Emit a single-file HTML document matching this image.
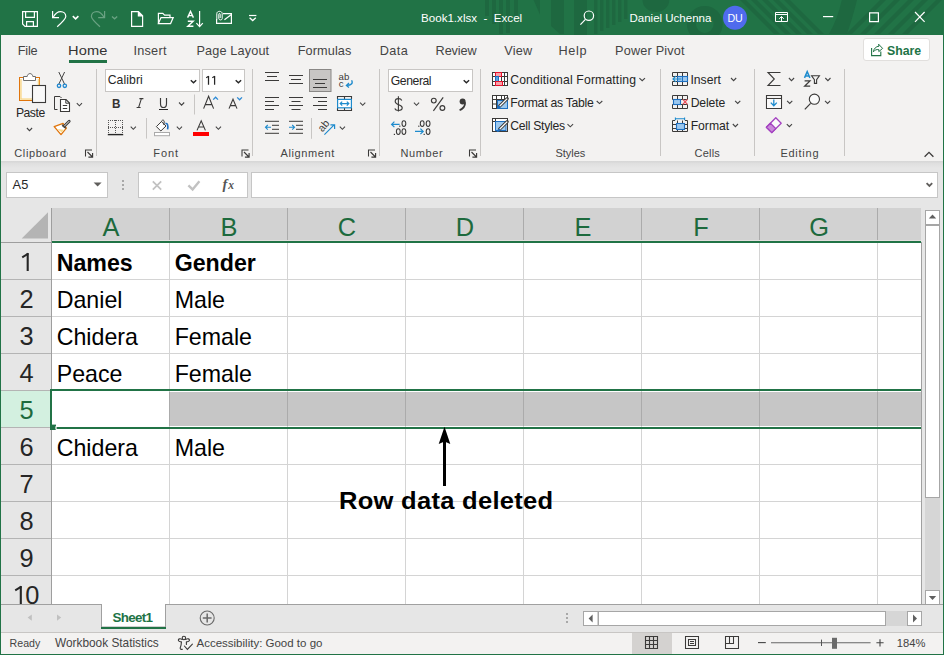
<!DOCTYPE html>
<html><head><meta charset="utf-8"><style>
*{box-sizing:border-box;margin:0;padding:0}
html,body{width:944px;height:655px;overflow:hidden}
body{position:relative;font-family:"Liberation Sans", sans-serif;background:#f3f2f1;color:#262626}
.a{position:absolute}
.t{position:absolute;white-space:nowrap;line-height:1}
.s{position:absolute;left:0;top:0}
</style></head><body>
<div class="a" style="left:0px;top:0px;width:944px;height:35px;background:#217346;"></div>
<svg class="s" width="944" height="655" viewBox="0 0 944 655" fill="none"><svg x="0" y="0" width="944" height="35" overflow="hidden"><rect x="485" y="0" width="4" height="16" fill="#1e6840"/><rect x="492" y="0" width="4" height="24" fill="#1e6840"/><rect x="499" y="0" width="4" height="34" fill="#1e6840"/><rect x="506" y="0" width="4" height="33" fill="#1e6840"/><rect x="514" y="0" width="4" height="16" fill="#1e6840"/><path d="M533.6 0 L540 0 L540 14.8 Z" fill="#1e6840"/><path d="M551 0 H564 V34 H560 L551 26 Z" fill="#1e6840"/><rect x="574" y="0" width="13" height="35" fill="#1e6840"/><rect x="594" y="0" width="3.4" height="34" fill="#1e6840"/><rect x="600" y="0" width="3.4" height="31" fill="#1e6840"/><rect x="606" y="0" width="3.4" height="28" fill="#1e6840"/><rect x="612" y="0" width="3.4" height="25" fill="#1e6840"/><rect x="618" y="0" width="3.4" height="22" fill="#1e6840"/><rect x="624" y="0" width="3.4" height="19" fill="#1e6840"/><path d="M642.5 0 A13.4 12 0 0 0 669.3 0 Z" fill="#1e6840"/><circle cx="704.8" cy="24" r="13.4" stroke="#1e6840" stroke-width="9"/><path d="M740 0 L746 0 L780 34 L774 34 Z" fill="#1e6840"/><path d="M751 0 L757 0 L791 34 L785 34 Z" fill="#1e6840"/><path d="M762 0 L768 0 L802 34 L796 34 Z" fill="#1e6840"/><path d="M773 0 L779 0 L813 34 L807 34 Z" fill="#1e6840"/><path d="M784 0 L790 0 L824 34 L818 34 Z" fill="#1e6840"/><path d="M841.8 0 L857 0 Q852 20 846.9 34 L829 34 Q838 18 841.8 0 Z" fill="#1e6840"/><path d="M880 0 L886 0 L852 34 L846 34 Z" fill="#1e6840"/><path d="M894 0 L900 0 L866 34 L860 34 Z" fill="#1e6840"/><path d="M908 0 L914 0 L880 34 L874 34 Z" fill="#1e6840"/><path d="M922 0 L928 0 L894 34 L888 34 Z" fill="#1e6840"/><path d="M936 0 L942 0 L908 34 L902 34 Z" fill="#1e6840"/></svg>
<path d="M22.6 11.6 H37.4 V26.4 H25 L22.6 24 Z" stroke="#fff" stroke-width="1.2"/>
<path d="M25.6 11.6 V17.4 H34.4 V11.6" stroke="#fff" stroke-width="1.2"/>
<path d="M26.6 26.4 V21.6 H33.4 V26.4" stroke="#fff" stroke-width="1.2"/>
<path d="M52.6 11 V17.6 H59" stroke="#fff" stroke-width="1.2"/>
<path d="M53.2 17.2 C55.5 13.2 58 11.6 60.6 11.6 C63.6 11.6 65.8 13.8 65.8 16.6 C65.8 18.8 64.2 20.6 57.2 26.8" stroke="#fff" stroke-width="1.2"/>
<path d="M72.8 16.2 L75.6 18.8 L78.4 16.2" stroke="#fff" stroke-width="1.6"/>
<path d="M104.6 11 V17.6 H98.2" stroke="#6aa283" stroke-width="1.2"/>
<path d="M104 17.2 C101.7 13.2 99.2 11.6 96.6 11.6 C93.6 11.6 91.4 13.8 91.4 16.6 C91.4 18.8 93 20.6 100 26.8" stroke="#6aa283" stroke-width="1.2"/>
<path d="M112 16.4 L114.6 18.8 L117.2 16.4" stroke="#6aa283" stroke-width="1.3"/>
<path d="M131.6 11.6 H138.4 L142.6 15.8 V26.4 H131.6 Z M138.4 11.6 V15.8 H142.6" stroke="#fff" stroke-width="1.2"/>
<path d="M138.4 11.6 L142.6 15.8 H138.4 Z" fill="#fff"/>
<path d="M158.4 23.6 V13.4 H162.8 L164.6 15.2 H170 V17.4" stroke="#fff" stroke-width="1.2"/>
<path d="M158.4 23.6 L161 17.6 H173.2 L170.6 23.6 Z" stroke="#fff" stroke-width="1.2"/>
<path d="M187.6 17.6 L190.5 11.5 L193.4 17.6 M188.6 15.6 H192.4" stroke="#fff" stroke-width="1.4"/>
<path d="M187.8 21.2 H193.2 L187.8 26.3 H193.4" stroke="#fff" stroke-width="1.4"/>
<path d="M199.6 11 V26.4 M196.4 23.2 L199.6 26.6 L202.8 23.2" stroke="#fff" stroke-width="1.2"/>
<path d="M216.6 19 V23.4 H231.4 V13.6 H223" stroke="#fff" stroke-width="1.2"/>
<path d="M224.4 19.8 L231.4 14.4" stroke="#fff" stroke-width="1.2"/>
<path d="M216.8 19.6 V13.6 C216.8 10.6 222.2 10.6 222.2 13.6 V18.6 C222.2 20.4 218.8 20.4 218.8 18.6 V14.2 C218.8 13.2 220.2 13.2 220.2 14.2 V18" stroke="#fff" stroke-width="1"/>
<path d="M249 15.5 H256.4" stroke="#fff" stroke-width="1.2"/><path d="M249.6 17.8 L252.7 20.6 L255.8 17.8" stroke="#fff" stroke-width="1.3"/></svg>
<div class="t" style="left:421.00px;top:11.64px;font-size:11.6px;color:#fff;">Book1.xlsx&nbsp;&nbsp;-&nbsp;&nbsp;Excel</div>
<svg class="s" width="944" height="655" viewBox="0 0 944 655" fill="none"><circle cx="588.9" cy="15.7" r="4.7" stroke="#fff" stroke-width="1.2"/><path d="M585.4 19.3 L580.4 24.6" stroke="#fff" stroke-width="1.2"/></svg>
<div class="t" style="left:629.50px;top:13.05px;font-size:11.5px;color:#fff;">Daniel Uchenna</div>
<svg class="s" width="944" height="655" viewBox="0 0 944 655" fill="none"><circle cx="735" cy="17.8" r="12" fill="#4f6bed"/></svg>
<div class="t" style="left:727.40px;top:13.14px;font-size:10.7px;color:#fff;">DU</div>
<svg class="s" width="944" height="655" viewBox="0 0 944 655" fill="none"><path d="M775.5 12.5 H787.5 V21.5 H775.5 Z M775.5 14.5 H787.5" stroke="#fff" stroke-width="1"/>
<path d="M781.5 21.5 V16.6 M779.2 18.8 L781.5 16.5 L783.8 18.8" stroke="#fff" stroke-width="1"/>
<path d="M823 16.6 H833.2" stroke="#fff" stroke-width="1.2"/>
<path d="M869.6 12.8 H878.4 V21.6 H869.6 Z" stroke="#fff" stroke-width="1.2"/>
<path d="M915 12 L924.6 21.8 M924.6 12 L915 21.8" stroke="#fff" stroke-width="1.2"/></svg>
<div class="t" style="left:17.80px;top:45.31px;font-size:12.7px;color:#444444;letter-spacing:-0.2px;">File</div>
<div class="t" style="left:133.40px;top:45.31px;font-size:12.7px;color:#444444;letter-spacing:0.26px;">Insert</div>
<div class="t" style="left:196.50px;top:45.31px;font-size:12.7px;color:#444444;letter-spacing:0.14px;">Page Layout</div>
<div class="t" style="left:297.70px;top:45.31px;font-size:12.7px;color:#444444;letter-spacing:0.11px;">Formulas</div>
<div class="t" style="left:379.70px;top:45.31px;font-size:12.7px;color:#444444;letter-spacing:0.4px;">Data</div>
<div class="t" style="left:435.60px;top:45.31px;font-size:12.7px;color:#444444;letter-spacing:-0.12px;">Review</div>
<div class="t" style="left:504.20px;top:45.31px;font-size:12.7px;color:#444444;letter-spacing:0.27px;">View</div>
<div class="t" style="left:558.40px;top:45.31px;font-size:12.7px;color:#444444;letter-spacing:0.73px;">Help</div>
<div class="t" style="left:615.10px;top:45.31px;font-size:12.7px;color:#444444;letter-spacing:0.18px;">Power Pivot</div>
<div class="t" style="left:68.40px;top:45.31px;font-size:12.7px;color:#333;letter-spacing:0.1px;transform:scaleX(1.15);transform-origin:0 0">Home</div>
<div class="a" style="left:69px;top:60px;width:38px;height:3px;background:#217346;"></div>
<div class="a" style="left:863px;top:38px;width:67px;height:23px;background:#fff;border:1px solid #e1dfdd;border-radius:3px"></div>
<div class="t" style="left:887.00px;top:44.75px;font-size:12.3px;color:#217346;font-weight:700;">Share</div>
<svg class="s" width="944" height="655" viewBox="0 0 944 655" fill="none"><path d="M871.6 48 V55.6 H880.8 V51.4" stroke="#217346" stroke-width="1.1"/>
<path d="M873.4 51.8 C873.8 48.6 876 46.4 879 46.2 L878.6 44.2 L882.6 48.4 L878.8 51.6 L878.8 49.6 C876.6 49.2 874.8 50 873.4 51.8 Z" stroke="#217346" stroke-width="1" stroke-linejoin="round"/>
<rect x="19.5" y="77.5" width="20" height="23" fill="#fbfbfb" stroke="#e0750c" stroke-width="1"/>
<path d="M21 79 V99 H38.5 V79" stroke="#f9d88a" stroke-width="1.6"/>
<rect x="21.8" y="79.8" width="15.4" height="18.4" fill="#fafafa"/>
<path d="M23.5 80.5 V76.5 H27.2 C27.6 72.6 32.4 72.6 32.8 76.5 H35.5 V80.5 Z" fill="#fff" stroke="#6e6e6e" stroke-width="1"/>
<rect x="32.5" y="85.5" width="13" height="17" fill="#f9f9f9" stroke="#3b3a39" stroke-width="1.1"/></svg>
<div class="t" style="left:15.90px;top:107.47px;font-size:12.2px;color:#262626;letter-spacing:-0.47px;">Paste</div>
<svg class="s" width="944" height="655" viewBox="0 0 944 655" fill="none"><path d="M26.9 128.0 L29.5 130.6 L32.1 128.0" stroke="#444" stroke-width="1.1"/>
<path d="M58.8 72 L64.6 84.2 M64.6 72 L58.8 84.2" stroke="#444" stroke-width="1"/>
<circle cx="59" cy="85.8" r="1.7" stroke="#1e88d0" stroke-width="1.3"/><circle cx="64.8" cy="85.8" r="1.7" stroke="#1e88d0" stroke-width="1.3"/>
<path d="M57.5 109.5 H54.5 V96.5 H60 L61.5 98" stroke="#3b3a39" stroke-width="1"/>
<path d="M60.5 99.5 H66 L69.5 103 V111.5 H60.5 Z" fill="#fff" stroke="#3b3a39" stroke-width="1.1"/>
<path d="M65.8 99.5 V103.2 H69.5 M62.8 105.5 H67.2 M62.8 108.5 H67.2" stroke="#3b3a39" stroke-width="1"/>
<path d="M76.8 103.2 L79.4 105.8 L82.0 103.2" stroke="#444" stroke-width="1.1"/>
<path d="M54.2 126.6 L63 123.4 L66.4 128.2 L61 134.6 Z" fill="#fff" stroke="#e0750c" stroke-width="1.3" stroke-linejoin="round"/>
<path d="M57.5 129 L61.8 132.4 L63.6 129.8 Z" fill="#f9d88a"/>
<path d="M62.6 126.6 L68.6 120.6 C69.4 119.8 70.6 121 69.8 121.8 L63.8 127.8" fill="#fff" stroke="#3b3a39" stroke-width="1.1"/>
<path d="M62 124.6 L65.8 128.4" stroke="#3b3a39" stroke-width="1.2"/></svg>
<div class="t" style="left:14.30px;top:147.71px;font-size:11px;color:#444;letter-spacing:0.6px;">Clipboard</div>
<svg class="s" width="944" height="655" viewBox="0 0 944 655" fill="none"><path d="M85.5 156.5 V150.0 H92" stroke="#3b3a39" stroke-width="1.05"/>
<path d="M87.5 152.0 L92.5 157.0 M92.6 152.9 V157.1 H88.4" stroke="#3b3a39" stroke-width="1.15"/>
<path d="M96.5 69 V156" stroke="#c8c6c4" stroke-width="1"/></svg>
<div class="a" style="left:105px;top:69px;width:95px;height:23px;background:#fff;border:1px solid #c8c6c4"></div>
<div class="t" style="left:107.70px;top:74.47px;font-size:12.2px;color:#262626;letter-spacing:0.1px;">Calibri</div>
<svg class="s" width="944" height="655" viewBox="0 0 944 655" fill="none"><path d="M190.8 80.2 L193.5 82.8 L196.2 80.2" stroke="#262626" stroke-width="1.4"/></svg>
<div class="a" style="left:202px;top:69px;width:43px;height:23px;background:#fff;border:1px solid #c8c6c4"></div>
<svg class="s" width="944" height="655" viewBox="0 0 944 655" fill="none"><path d="M208.5 75.9 V84.8 M214.6 75.9 V84.8" stroke="#262626" stroke-width="1.25"/><path d="M208.6 76.3 L206.2 77.8 M214.7 76.3 L212.3 77.8" stroke="#262626" stroke-width="1.1"/>
<path d="M235.7 80.2 L238.4 82.8 L241.1 80.2" stroke="#262626" stroke-width="1.4"/></svg>
<div class="t" style="left:112.20px;top:96.70px;font-size:13.6px;color:#333;font-weight:700;transform:scaleX(0.86);transform-origin:0 0">B</div>
<svg class="s" width="944" height="655" viewBox="0 0 944 655" fill="none"><path d="M139.4 98.6 H143.4 M141.4 98.6 L138.6 107.5 M136.6 107.5 H140.6" stroke="#3b3a39" stroke-width="1.05"/>
<path d="M160.5 98 V103.4 C160.5 106.1 161.8 107.5 163.5 107.5 C165.2 107.5 166.5 106.1 166.5 103.4 V98" stroke="#3b3a39" stroke-width="1.15"/>
<path d="M159 109.5 H168" stroke="#262626" stroke-width="1"/>
<path d="M179.0 102.5 L181.6 105.1 L184.2 102.5" stroke="#444" stroke-width="1.1"/>
<path d="M194.5 94.5 V114.5" stroke="#c8c6c4" stroke-width="1"/>
<path d="M203.6 108.6 L208.6 96.2 L213.6 108.6 M205.3 104.6 H211.9" stroke="#3b3a39" stroke-width="1.1"/>
<path d="M213.2 99.6 L215.6 97.2 L218 99.6" stroke="#2b8ad6" stroke-width="1.3"/>
<path d="M229 108.6 L233 99.2 L237 108.6 M230.3 105.6 H235.7" stroke="#3b3a39" stroke-width="1.1"/>
<path d="M237.2 97.4 L239.6 99.8 L242 97.4" stroke="#2b8ad6" stroke-width="1.3"/>
<rect x="108" y="120" width="1" height="1" fill="#555"/><rect x="108" y="127" width="1" height="1" fill="#555"/><rect x="110" y="120" width="1" height="1" fill="#555"/><rect x="110" y="127" width="1" height="1" fill="#555"/><rect x="112" y="120" width="1" height="1" fill="#555"/><rect x="112" y="127" width="1" height="1" fill="#555"/><rect x="114" y="120" width="1" height="1" fill="#555"/><rect x="114" y="127" width="1" height="1" fill="#555"/><rect x="116" y="120" width="1" height="1" fill="#555"/><rect x="116" y="127" width="1" height="1" fill="#555"/><rect x="118" y="120" width="1" height="1" fill="#555"/><rect x="118" y="127" width="1" height="1" fill="#555"/><rect x="120" y="120" width="1" height="1" fill="#555"/><rect x="120" y="127" width="1" height="1" fill="#555"/><rect x="122" y="120" width="1" height="1" fill="#555"/><rect x="122" y="127" width="1" height="1" fill="#555"/><rect x="108" y="120" width="1" height="1" fill="#555"/><rect x="115" y="120" width="1" height="1" fill="#555"/><rect x="122" y="120" width="1" height="1" fill="#555"/><rect x="108" y="122" width="1" height="1" fill="#555"/><rect x="115" y="122" width="1" height="1" fill="#555"/><rect x="122" y="122" width="1" height="1" fill="#555"/><rect x="108" y="124" width="1" height="1" fill="#555"/><rect x="115" y="124" width="1" height="1" fill="#555"/><rect x="122" y="124" width="1" height="1" fill="#555"/><rect x="108" y="126" width="1" height="1" fill="#555"/><rect x="115" y="126" width="1" height="1" fill="#555"/><rect x="122" y="126" width="1" height="1" fill="#555"/><rect x="108" y="128" width="1" height="1" fill="#555"/><rect x="115" y="128" width="1" height="1" fill="#555"/><rect x="122" y="128" width="1" height="1" fill="#555"/><rect x="108" y="130" width="1" height="1" fill="#555"/><rect x="115" y="130" width="1" height="1" fill="#555"/><rect x="122" y="130" width="1" height="1" fill="#555"/><rect x="108" y="132" width="1" height="1" fill="#555"/><rect x="115" y="132" width="1" height="1" fill="#555"/><rect x="122" y="132" width="1" height="1" fill="#555"/>
<path d="M107.8 134.6 H123.2" stroke="#262626" stroke-width="1.4"/>
<path d="M130.7 126.7 L133.3 129.3 L135.9 126.7" stroke="#444" stroke-width="1.1"/>
<path d="M146.5 118 V138.6" stroke="#c8c6c4" stroke-width="1"/>
<path d="M156.4 126.6 L161.4 121.6 L166 126 L160.8 131 Z" fill="#fff" stroke="#3b3a39" stroke-width="1"/>
<path d="M161.4 121.6 C161.8 119.6 164.4 119.6 164.2 121.8 L163.8 125" stroke="#3b3a39" stroke-width="1"/>
<path d="M165.4 123.6 C167.4 122.8 168.4 125.6 167.6 129.4" stroke="#1e6fc0" stroke-width="1.6"/>
<rect x="154.5" y="132.5" width="15" height="3.2" fill="#fff" stroke="#aaa" stroke-width="1"/>
<path d="M176.8 126.7 L179.4 129.3 L182.0 126.7" stroke="#444" stroke-width="1.1"/>
<path d="M197 130.4 L201.2 120.8 L205.4 130.4 M198.4 127 H204" stroke="#3b3a39" stroke-width="1.1"/></svg>
<div class="a" style="left:193px;top:132px;width:16px;height:4px;background:#ff0000;"></div>
<svg class="s" width="944" height="655" viewBox="0 0 944 655" fill="none"><path d="M215.8 126.7 L218.4 129.3 L221.0 126.7" stroke="#444" stroke-width="1.1"/></svg>
<div class="t" style="left:153.30px;top:147.71px;font-size:11px;color:#444;letter-spacing:0.95px;">Font</div>
<svg class="s" width="944" height="655" viewBox="0 0 944 655" fill="none"><path d="M242.0 156.5 V150.0 H248.5" stroke="#3b3a39" stroke-width="1.05"/>
<path d="M244.0 152.0 L249.0 157.0 M249.1 152.9 V157.1 H244.9" stroke="#3b3a39" stroke-width="1.15"/>
<path d="M252.5 69 V156" stroke="#c8c6c4" stroke-width="1"/>
<path d="M265.0 72.5 h14 M267.0 76.5 h10 M265.0 80.5 h14 " stroke="#3b3a39" stroke-width="1"/>
<path d="M289.0 75.5 h14 M291.0 79.5 h10 M289.0 83.5 h14 " stroke="#3b3a39" stroke-width="1"/>
<rect x="309.5" y="69.5" width="21.5" height="22" fill="#c8c6c4" stroke="#8a8886" stroke-width="1"/>
<path d="M313.0 79.5 h14 M315.0 83.5 h10 M313.0 87.5 h14 " stroke="#3b3a39" stroke-width="1"/>
<text x="338.6" y="79.8" font-size="9.6" fill="#3b3a39" font-family="Liberation Sans">ab</text>
<text x="338.8" y="87" font-size="9.6" fill="#3b3a39" font-family="Liberation Sans">c</text>
<path d="M351.6 80.2 C353.4 83.4 351 85.6 346.6 85.4 M349 83 L346.4 85.4 L349 87.6" stroke="#1e8bcd" stroke-width="1.3"/>
<path d="M265 97.5 h14 M265 101.5 h9 M265 105.5 h14 M265 109.5 h9 " stroke="#3b3a39" stroke-width="1"/>
<path d="M289.0 97.5 h14 M291.5 101.5 h9 M289.0 105.5 h14 M291.5 109.5 h9 " stroke="#3b3a39" stroke-width="1"/>
<path d="M313 97.5 h14 M318 101.5 h9 M313 105.5 h14 M318 109.5 h9 " stroke="#3b3a39" stroke-width="1"/>
<path d="M337.5 99 V96.5 H351.5 V99 M337.5 108 V110.5 H351.5 V108 M344.5 96.5 V99 M344.5 108 V110.5" stroke="#3b3a39" stroke-width="1.1"/>
<rect x="337.6" y="99.4" width="13.8" height="8.4" fill="#fff" stroke="#1e8bcd" stroke-width="1.2"/>
<path d="M340.2 103.6 H348.8 M342.2 101.6 L340.2 103.6 L342.2 105.6 M346.8 101.6 L348.8 103.6 L346.8 105.6" stroke="#1e8bcd" stroke-width="1.2"/>
<path d="M360.1 102.7 L362.7 105.3 L365.3 102.7" stroke="#444" stroke-width="1.1"/>
<path d="M265 121.3 h14 M272 125.3 h7 M272 129.3 h7 M265 133.3 h14" stroke="#3b3a39" stroke-width="1"/>
<path d="M265.5 127.3 H271 M267.8 125 L265.5 127.3 L267.8 129.6" stroke="#1e8bcd" stroke-width="1.1"/>
<path d="M289 121.3 h14 M296 125.3 h7 M296 129.3 h7 M289 133.3 h14" stroke="#3b3a39" stroke-width="1"/>
<path d="M289 127.3 H294.5 M292.2 125 L294.5 127.3 L292.2 129.6" stroke="#1e8bcd" stroke-width="1.1"/>
<path d="M311.5 118 V138.8" stroke="#c8c6c4" stroke-width="1"/>
<text x="0" y="0" font-size="10.6" fill="#3b3a39" font-family="Liberation Sans" transform="translate(322.4 132.6) rotate(-50)">ab</text>
<path d="M324.4 134.6 L334.4 124.6 M330.4 124.8 H334.6 V129" stroke="#1e8bcd" stroke-width="1.2"/>
<path d="M339.8 126.7 L342.4 129.3 L345.0 126.7" stroke="#444" stroke-width="1.1"/></svg>
<div class="t" style="left:280.60px;top:147.71px;font-size:11px;color:#444;letter-spacing:0.6px;">Alignment</div>
<svg class="s" width="944" height="655" viewBox="0 0 944 655" fill="none"><path d="M368.5 156.5 V150.0 H375" stroke="#3b3a39" stroke-width="1.05"/>
<path d="M370.5 152.0 L375.5 157.0 M375.6 152.9 V157.1 H371.4" stroke="#3b3a39" stroke-width="1.15"/>
<path d="M379.5 69 V156" stroke="#c8c6c4" stroke-width="1"/></svg>
<div class="a" style="left:388px;top:69px;width:85px;height:23px;background:#fff;border:1px solid #c8c6c4"></div>
<div class="t" style="left:390.80px;top:74.67px;font-size:12.2px;color:#262626;letter-spacing:-0.43px;">General</div>
<svg class="s" width="944" height="655" viewBox="0 0 944 655" fill="none"><path d="M463.7 80.2 L466.4 82.8 L469.1 80.2" stroke="#262626" stroke-width="1.4"/>
<path d="M398.4 96.2 V111.6" stroke="#3b3a39" stroke-width="1.1"/>
<path d="M401.8 100.4 C401.2 99.1 400 98.6 398.4 98.6 C396.3 98.6 395.2 99.7 395.2 101.5 C395.2 105.4 402.2 104 402.2 107.8 C402.2 109.7 400.8 110.5 398.4 110.5 C396.7 110.5 395.3 109.9 394.8 108.5" stroke="#3b3a39" stroke-width="1.15"/>
<path d="M413.9 102.7 L416.5 105.3 L419.1 102.7" stroke="#444" stroke-width="1.1"/>
<circle cx="433.8" cy="100.6" r="2.4" stroke="#3b3a39" stroke-width="1.15"/><circle cx="442.4" cy="108" r="2.4" stroke="#3b3a39" stroke-width="1.15"/><path d="M443.2 97.4 L433.4 110.8" stroke="#3b3a39" stroke-width="1.15"/>
<circle cx="462.6" cy="101.6" r="3" fill="#3b3a39"/><path d="M465.1 102.2 C465.2 105.8 463.2 108.6 459.6 110.2" stroke="#3b3a39" stroke-width="1.8"/>
<ellipse cx="403.9" cy="123.6" rx="1.9" ry="2.85" stroke="#3b3a39" stroke-width="1.05"/>
<rect x="399.2" y="125.6" width="1.2" height="1.2" fill="#3b3a39"/>
<rect x="393.8" y="133.8" width="1.2" height="1.2" fill="#3b3a39"/>
<ellipse cx="398.3" cy="131.6" rx="1.9" ry="2.85" stroke="#3b3a39" stroke-width="1.05"/>
<ellipse cx="403.9" cy="131.6" rx="1.9" ry="2.85" stroke="#3b3a39" stroke-width="1.05"/>
<path d="M391.6 124.4 H399.6 M394.4 121.6 L391.6 124.4 L394.4 127.2" stroke="#1e8bcd" stroke-width="1.2"/>
<rect x="418.2" y="125.6" width="1.2" height="1.2" fill="#3b3a39"/>
<ellipse cx="422.2" cy="123.6" rx="1.9" ry="2.85" stroke="#3b3a39" stroke-width="1.05"/>
<ellipse cx="428.1" cy="123.6" rx="1.9" ry="2.85" stroke="#3b3a39" stroke-width="1.05"/>
<rect x="423.6" y="133.8" width="1.2" height="1.2" fill="#3b3a39"/>
<ellipse cx="428.1" cy="131.6" rx="1.9" ry="2.85" stroke="#3b3a39" stroke-width="1.05"/>
<path d="M415 131.4 H423.2 M420.4 128.6 L423.2 131.4 L420.4 134.2" stroke="#1e8bcd" stroke-width="1.2"/></svg>
<div class="t" style="left:400.50px;top:147.71px;font-size:11px;color:#444;letter-spacing:0.6px;">Number</div>
<svg class="s" width="944" height="655" viewBox="0 0 944 655" fill="none"><path d="M469.5 156.5 V150.0 H476" stroke="#3b3a39" stroke-width="1.05"/>
<path d="M471.5 152.0 L476.5 157.0 M476.6 152.9 V157.1 H472.4" stroke="#3b3a39" stroke-width="1.15"/>
<path d="M480.5 69 V156" stroke="#c8c6c4" stroke-width="1"/>
<rect x="492.5" y="72.5" width="15" height="13" fill="#fff" stroke="#3b3a39" stroke-width="1"/>
<path d="M495.5 72.5 V85.5 M501.5 72.5 V85.5 M504.5 72.5 V85.5 M492.5 76.5 H507.5 M492.5 81.5 H507.5" stroke="#3b3a39" stroke-width="1"/>
<rect x="495.5" y="72.5" width="6" height="4" fill="#f7a1a8" stroke="#e8112d" stroke-width="1"/>
<rect x="495.5" y="76.5" width="3" height="5" fill="#5ba3e0" stroke="#1e6fc0" stroke-width="1"/>
<rect x="495.5" y="81.5" width="7" height="4" fill="#f7a1a8" stroke="#e8112d" stroke-width="1"/></svg>
<div class="t" style="left:510.20px;top:73.67px;font-size:12.2px;color:#262626;letter-spacing:0.15px;">Conditional Formatting</div>
<svg class="s" width="944" height="655" viewBox="0 0 944 655" fill="none"><path d="M639.4 78.1 L642.2 80.7 L645.0 78.1" stroke="#444" stroke-width="1.1"/>
<rect x="492.5" y="95.5" width="15" height="13" fill="#fff" stroke="#3b3a39" stroke-width="1"/>
<path d="M496.5 95.5 V108.5 M501.5 95.5 V100.5 M504.5 95.5 V100.5 M492.5 99.5 H507.5 M492.5 104 H497" stroke="#3b3a39" stroke-width="1"/>
<rect x="497.5" y="100.5" width="10" height="8" fill="#9cc8ef" stroke="#1e6fc0" stroke-width="1"/>
<path d="M499.6 106.2 L507.2 98.6" stroke="#3b3a39" stroke-width="3.2" stroke-linecap="round"/><path d="M499.6 106.2 L507.2 98.6" stroke="#fff" stroke-width="1.3"/>
<path d="M496.6 109 C497.4 106.6 498.6 105.4 500.4 106 C500.8 107.8 499 109.2 496.6 109 Z" fill="#1e6fc0"/></svg>
<div class="t" style="left:510.20px;top:96.67px;font-size:12.2px;color:#262626;letter-spacing:-0.25px;">Format as Table</div>
<svg class="s" width="944" height="655" viewBox="0 0 944 655" fill="none"><path d="M596.7 101.0 L599.5 103.6 L602.3 101.0" stroke="#444" stroke-width="1.1"/>
<rect x="492.5" y="118.5" width="15" height="13" fill="#fff" stroke="#3b3a39" stroke-width="1"/>
<path d="M495.5 118.5 V131.5 M492.5 121.5 H507.5" stroke="#3b3a39" stroke-width="1"/>
<rect x="495.5" y="121.5" width="10.5" height="9" fill="#9cc8ef" stroke="#1e6fc0" stroke-width="1"/>
<path d="M499.6 129.2 L507.2 121.6" stroke="#3b3a39" stroke-width="3.2" stroke-linecap="round"/><path d="M499.6 129.2 L507.2 121.6" stroke="#fff" stroke-width="1.3"/>
<path d="M496.6 132 C497.4 129.6 498.6 128.4 500.4 129 C500.8 130.8 499 132.2 496.6 132 Z" fill="#1e6fc0"/></svg>
<div class="t" style="left:510.20px;top:119.77px;font-size:12.2px;color:#262626;letter-spacing:-0.27px;">Cell Styles</div>
<svg class="s" width="944" height="655" viewBox="0 0 944 655" fill="none"><path d="M567.5 124.2 L570.3 126.8 L573.1 124.2" stroke="#444" stroke-width="1.1"/></svg>
<div class="t" style="left:555.50px;top:147.71px;font-size:11px;color:#444;letter-spacing:-0.05px;">Styles</div>
<svg class="s" width="944" height="655" viewBox="0 0 944 655" fill="none"><path d="M660.5 69 V156" stroke="#c8c6c4" stroke-width="1"/>
<path d="M672.5 76.5 V72.5 H687.5 V85.5 H672.5 V81.5 M677.5 72.5 V76.5 M682.5 72.5 V76.5 M677.5 81.5 V85.5 M682.5 81.5 V85.5 M672.5 76.5 H677.5 M672.5 81.5 H677.5" stroke="#3b3a39" stroke-width="1"/>
<rect x="677.5" y="76.5" width="10" height="5" fill="#9cc8ef" stroke="#1e6fc0" stroke-width="1.1"/><path d="M682.5 76.5 V81.5" stroke="#1e6fc0" stroke-width="1"/>
<path d="M673 79 H681.4 M675.8 76.2 L673 79 L675.8 81.8" stroke="#1e8bcd" stroke-width="1.2"/></svg>
<div class="t" style="left:690.40px;top:73.67px;font-size:12.2px;color:#262626;letter-spacing:0px;">Insert</div>
<svg class="s" width="944" height="655" viewBox="0 0 944 655" fill="none"><path d="M731.0 78.0 L733.6 80.6 L736.2 78.0" stroke="#444" stroke-width="1.1"/>
<path d="M672.5 99.5 V95.5 H687.5 V99.5 M672.5 104.5 V108.5 H687.5 V104.5 M677.5 95.5 V99.5 M682.5 95.5 V99.5 M677.5 104.5 V108.5 M682.5 104.5 V108.5 M672.5 99.5 H687.5 M672.5 104.5 H687.5" stroke="#3b3a39" stroke-width="1"/>
<rect x="673.5" y="99.5" width="7" height="5" fill="#9cc8ef" stroke="#1e6fc0" stroke-width="1.1"/>
<path d="M682.8 99.4 L687.4 104.4 M687.4 99.4 L682.8 104.4" stroke="#e8505b" stroke-width="1.3"/></svg>
<div class="t" style="left:690.70px;top:96.57px;font-size:12.2px;color:#262626;letter-spacing:-0.14px;">Delete</div>
<svg class="s" width="944" height="655" viewBox="0 0 944 655" fill="none"><path d="M735.1 100.9 L737.7 103.5 L740.3 100.9" stroke="#444" stroke-width="1.1"/>
<path d="M672.5 120.5 H675 M685 120.5 H687.5 M672.5 120.5 V131.5 H687.5 V120.5 M677.5 120.5 V131.5 M682.5 120.5 V131.5 M672.5 124.5 H687.5 M672.5 128.5 H687.5" stroke="#3b3a39" stroke-width="1"/>
<rect x="676.5" y="123.5" width="8" height="6" fill="#9cc8ef" stroke="#1e6fc0" stroke-width="1.1"/>
<path d="M675.4 118.8 H684.6 M675.4 117.4 V120.2 M684.6 117.4 V120.2" stroke="#1e8bcd" stroke-width="1.1"/></svg>
<div class="t" style="left:690.70px;top:119.77px;font-size:12.2px;color:#262626;letter-spacing:-0.02px;">Format</div>
<svg class="s" width="944" height="655" viewBox="0 0 944 655" fill="none"><path d="M732.8 124.0 L735.4 126.6 L738.0 124.0" stroke="#444" stroke-width="1.1"/></svg>
<div class="t" style="left:694.60px;top:147.71px;font-size:11px;color:#444;letter-spacing:0.2px;">Cells</div>
<svg class="s" width="944" height="655" viewBox="0 0 944 655" fill="none"><path d="M754.5 69 V156" stroke="#c8c6c4" stroke-width="1"/>
<path d="M780.5 72.5 H768 L774.3 79 L768 85.5 H780.5" stroke="#3b3a39" stroke-width="1.1"/>
<path d="M788.9 78.0 L791.5 80.6 L794.1 78.0" stroke="#444" stroke-width="1.1"/>
<path d="M804.5 77.9 L807.2 71.7 L809.9 77.9 M805.4 75.9 H809" stroke="#1e8bcd" stroke-width="1.5"/>
<path d="M804.6 80.9 H810 L804.6 86.2 H810.2" stroke="#3b3a39" stroke-width="1.2"/>
<path d="M811.6 75.8 H819.4 L816.6 79.6 V83.4 H814.4 V79.6 Z" stroke="#3b3a39" stroke-width="1.1"/>
<path d="M825.3 78.0 L827.9 80.6 L830.5 78.0" stroke="#444" stroke-width="1.1"/>
<path d="M766.5 95.5 H781.5 V108.5 H766.5 Z M766.5 98.5 H781.5" stroke="#3b3a39" stroke-width="1.1"/>
<rect x="767" y="99" width="14" height="9" fill="#fafafa"/>
<path d="M773.8 99.6 V105.6 M770.8 102.6 L773.8 105.7 L776.8 102.6" stroke="#1e8bcd" stroke-width="1.3"/>
<path d="M787.1 100.9 L789.7 103.5 L792.3 100.9" stroke="#444" stroke-width="1.1"/>
<circle cx="814.4" cy="99.2" r="5.1" fill="#fafafa" stroke="#3b3a39" stroke-width="1.1"/><path d="M810.6 103.4 L804.8 109.4" stroke="#3b3a39" stroke-width="1.2"/>
<path d="M825.0 100.9 L827.6 103.5 L830.2 100.9" stroke="#444" stroke-width="1.1"/>
<path d="M775.8 117.8 L781.2 123.2 L771.8 132.6 L766.4 127.2 Z" fill="#fafafa" stroke="#a33fc0" stroke-width="1.3" stroke-linejoin="round"/>
<path d="M766.4 127.2 L770.4 123.2 L775.8 128.6 L771.8 132.6 Z" fill="#c98ad9" stroke="#a33fc0" stroke-width="1.3" stroke-linejoin="round"/>
<path d="M786.8 124.1 L789.4 126.7 L792.0 124.1" stroke="#444" stroke-width="1.1"/></svg>
<div class="t" style="left:780.40px;top:147.71px;font-size:11px;color:#444;letter-spacing:0.75px;">Editing</div>
<svg class="s" width="944" height="655" viewBox="0 0 944 655" fill="none"><path d="M844.5 69 V156" stroke="#c8c6c4" stroke-width="1"/>
<path d="M924.6 156.8 L929 152.4 L933.4 156.8" stroke="#3b3a39" stroke-width="1.3"/></svg>
<div class="a" style="left:1px;top:161px;width:942px;height:444px;background:#e6e6e6;"></div>
<div class="a" style="left:1px;top:161px;width:942px;height:2px;background:linear-gradient(#d6d6d6,#dcdcdc);"></div>
<div class="a" style="left:1px;top:163px;width:942px;height:5px;background:linear-gradient(#dedede,#e6e6e6);"></div>
<div class="a" style="left:6px;top:172px;width:102px;height:26px;background:#fff;border:1px solid #c6c6c6"></div>
<div class="t" style="left:12.60px;top:179.40px;font-size:12.8px;color:#262626;">A5</div>
<svg class="s" width="944" height="655" viewBox="0 0 944 655" fill="none"><path d="M93.6 182.4 H101.6 L97.6 186.6 Z" fill="#605e5c"/>
<rect x="122" y="180" width="2" height="2" fill="#a8a8a8"/><rect x="122" y="184" width="2" height="2" fill="#a8a8a8"/><rect x="122" y="188" width="2" height="2" fill="#a8a8a8"/></svg>
<div class="a" style="left:138px;top:172px;width:110px;height:26px;background:#fff;border:1px solid #c6c6c6"></div>
<svg class="s" width="944" height="655" viewBox="0 0 944 655" fill="none"><path d="M152.8 181.4 L161.2 189.6 M161.2 181.4 L152.8 189.6" stroke="#c2c2c2" stroke-width="1.8"/>
<path d="M188.4 185.4 L192.6 189.4 L199.4 181.2" stroke="#c2c2c2" stroke-width="2.4"/>
<text x="222.6" y="188.6" font-size="14.5" font-style="italic" font-weight="700" fill="#555" font-family="Liberation Serif">f</text>
<text x="228.2" y="189.2" font-size="11.5" font-style="italic" font-weight="700" fill="#555" font-family="Liberation Serif">x</text></svg>
<div class="a" style="left:251px;top:172px;width:687px;height:26px;background:#fff;border:1px solid #c6c6c6"></div>
<svg class="s" width="944" height="655" viewBox="0 0 944 655" fill="none"><path d="M926.6 183.2 L929.4 186 L932.2 183.2" stroke="#605e5c" stroke-width="1.8"/></svg>
<div class="a" style="left:1px;top:208px;width:50px;height:34px;background:#e6e6e6;"></div>
<svg class="s" width="944" height="655" viewBox="0 0 944 655" fill="none"><path d="M21.7 238.6 L48 238.6 L48 212.3 Z" fill="#b4b4b4"/></svg>
<div class="a" style="left:52px;top:208px;width:869px;height:33px;background:#d2d2d2;"></div>
<div class="t" style="left:91.00px;top:214.62px;font-size:25.4px;color:#1d6a3d;width:40px;text-align:center">A</div>
<div class="t" style="left:209.00px;top:214.62px;font-size:25.4px;color:#1d6a3d;width:40px;text-align:center">B</div>
<svg class="s" width="944" height="655" viewBox="0 0 944 655" fill="none"><path d="M169.5 208 V241" stroke="#ababab" stroke-width="1"/></svg>
<div class="t" style="left:327.00px;top:214.62px;font-size:25.4px;color:#1d6a3d;width:40px;text-align:center">C</div>
<svg class="s" width="944" height="655" viewBox="0 0 944 655" fill="none"><path d="M287.5 208 V241" stroke="#ababab" stroke-width="1"/></svg>
<div class="t" style="left:445.00px;top:214.62px;font-size:25.4px;color:#1d6a3d;width:40px;text-align:center">D</div>
<svg class="s" width="944" height="655" viewBox="0 0 944 655" fill="none"><path d="M405.5 208 V241" stroke="#ababab" stroke-width="1"/></svg>
<div class="t" style="left:563.00px;top:214.62px;font-size:25.4px;color:#1d6a3d;width:40px;text-align:center">E</div>
<svg class="s" width="944" height="655" viewBox="0 0 944 655" fill="none"><path d="M523.5 208 V241" stroke="#ababab" stroke-width="1"/></svg>
<div class="t" style="left:681.00px;top:214.62px;font-size:25.4px;color:#1d6a3d;width:40px;text-align:center">F</div>
<svg class="s" width="944" height="655" viewBox="0 0 944 655" fill="none"><path d="M641.5 208 V241" stroke="#ababab" stroke-width="1"/></svg>
<div class="t" style="left:799.00px;top:214.62px;font-size:25.4px;color:#1d6a3d;width:40px;text-align:center">G</div>
<svg class="s" width="944" height="655" viewBox="0 0 944 655" fill="none"><path d="M759.5 208 V241" stroke="#ababab" stroke-width="1"/>
<path d="M877.5 208 V241" stroke="#ababab" stroke-width="1"/>
<path d="M52 240.5 H921" stroke="#e3dede" stroke-width="1"/></svg>
<div class="a" style="left:1px;top:243px;width:50px;height:361px;background:#e6e6e6;"></div>
<div class="a" style="left:1px;top:391px;width:50px;height:36px;background:#d3f0e0;"></div>
<div class="a" style="left:52px;top:243px;width:869px;height:361px;background:#fff;"></div>
<div class="a" style="left:169px;top:392px;width:752px;height:34px;background:#c6c6c6;"></div>
<svg class="s" width="944" height="655" viewBox="0 0 944 655" fill="none"><path d="M52 279.5 H921 M52 316.5 H921 M52 353.5 H921 M52 390.5 H921 M52 427.5 H921 M52 464.5 H921 M52 501.5 H921 M52 538.5 H921 M52 575.5 H921 " stroke="#d4d4d4" stroke-width="1"/>
<path d="M169.5 243 V604 M287.5 243 V604 M405.5 243 V604 M523.5 243 V604 M641.5 243 V604 M759.5 243 V604 M877.5 243 V604 " stroke="#d4d4d4" stroke-width="1"/>
<path d="M169.5 392 V426 M287.5 392 V426 M405.5 392 V426 M523.5 392 V426 M641.5 392 V426 M759.5 392 V426 M877.5 392 V426 " stroke="#ababab" stroke-width="1"/>
<path d="M1 279.5 H51 M1 316.5 H51 M1 353.5 H51 M1 390.5 H51 M1 427.5 H51 M1 464.5 H51 M1 501.5 H51 M1 538.5 H51 M1 575.5 H51 " stroke="#b4b4b4" stroke-width="1"/>
<path d="M51.5 208 V604" stroke="#9e9e9e" stroke-width="1"/>
<path d="M1 242.5 H51" stroke="#9e9e9e" stroke-width="1"/>
<path d="M921.5 242 V604.5 M1 604.5 H922" stroke="#a0a0a0" stroke-width="1"/>
<path d="M52 242 H921" stroke="#217346" stroke-width="2"/>
<path d="M27.7 253 V271" stroke="#262626" stroke-width="2.1"/><path d="M28.2 253.6 L22.2 257.4" stroke="#262626" stroke-width="1.9"/></svg>
<div class="t" style="left:1.50px;top:286.82px;font-size:25.4px;color:#262626;width:50px;text-align:center">2</div>
<div class="t" style="left:1.50px;top:323.82px;font-size:25.4px;color:#262626;width:50px;text-align:center">3</div>
<div class="t" style="left:1.50px;top:360.82px;font-size:25.4px;color:#262626;width:50px;text-align:center">4</div>
<div class="t" style="left:1.50px;top:397.82px;font-size:25.4px;color:#1d6a3d;width:50px;text-align:center">5</div>
<div class="t" style="left:1.50px;top:434.82px;font-size:25.4px;color:#262626;width:50px;text-align:center">6</div>
<div class="t" style="left:1.50px;top:471.82px;font-size:25.4px;color:#262626;width:50px;text-align:center">7</div>
<div class="t" style="left:1.50px;top:508.82px;font-size:25.4px;color:#262626;width:50px;text-align:center">8</div>
<div class="t" style="left:1.50px;top:545.82px;font-size:25.4px;color:#262626;width:50px;text-align:center">9</div>
<svg class="s" width="944" height="655" viewBox="0 0 944 655" fill="none"><path d="M20.8 586 V604" stroke="#262626" stroke-width="2.1"/><path d="M21.3 586.6 L15.2 590.4" stroke="#262626" stroke-width="1.9"/></svg>
<div class="t" style="left:25.20px;top:582.82px;font-size:25.4px;color:#262626;">0</div>
<svg class="s" width="944" height="655" viewBox="0 0 944 655" fill="none"><path d="M52 390 H921 M52 428 H921" stroke="#217346" stroke-width="2"/>
<path d="M51 389 V425" stroke="#217346" stroke-width="2"/>
<rect x="50" y="424.6" width="6" height="5.4" fill="#217346"/>
<path d="M56 426.2 V429.6" stroke="#fff" stroke-width="1.2"/></svg>
<div class="t" style="left:56.70px;top:251.87px;font-size:23.2px;color:#000;font-weight:700;">Names</div>
<div class="t" style="left:174.70px;top:251.87px;font-size:23.2px;color:#000;font-weight:700;">Gender</div>
<div class="t" style="left:56.70px;top:288.87px;font-size:23.2px;color:#000;">Daniel</div>
<div class="t" style="left:174.70px;top:288.87px;font-size:23.2px;color:#000;">Male</div>
<div class="t" style="left:56.70px;top:325.87px;font-size:23.2px;color:#000;">Chidera</div>
<div class="t" style="left:174.70px;top:325.87px;font-size:23.2px;color:#000;">Female</div>
<div class="t" style="left:56.70px;top:362.87px;font-size:23.2px;color:#000;">Peace</div>
<div class="t" style="left:174.70px;top:362.87px;font-size:23.2px;color:#000;">Female</div>
<div class="t" style="left:56.70px;top:436.87px;font-size:23.2px;color:#000;">Chidera</div>
<div class="t" style="left:174.70px;top:436.87px;font-size:23.2px;color:#000;">Male</div>
<svg class="s" width="944" height="655" viewBox="0 0 944 655" fill="none"><path d="M444.5 440 V486" stroke="#000" stroke-width="3"/>
<path d="M444.5 426.8 L450.3 444 L444.5 441.4 L438.7 444 Z" fill="#000"/></svg>
<div class="t" style="left:339.00px;top:489.90px;font-size:23.0px;color:#000;font-weight:700;letter-spacing:0.25px;transform:scaleX(1.11);transform-origin:0 0">Row data deleted</div>
<div class="a" style="left:922px;top:208px;width:21px;height:397px;background:#e6e6e6;"></div>
<svg class="s" width="944" height="655" viewBox="0 0 944 655" fill="none"><rect x="925.5" y="210.5" width="14" height="14" fill="#fff" stroke="#a6a6a6" stroke-width="1"/>
<path d="M928.8 218.4 H936.2 L932.5 214.4 Z" fill="#606060"/>
<rect x="925" y="225" width="15" height="365" fill="#d6d6d6"/>
<rect x="925.5" y="225.5" width="14" height="272" fill="#fff" stroke="#a6a6a6" stroke-width="1"/>
<rect x="925.5" y="590.5" width="14" height="14" fill="#fff" stroke="#a6a6a6" stroke-width="1"/>
<path d="M928.8 596 H936.2 L932.5 600 Z" fill="#606060"/></svg>
<div class="a" style="left:1px;top:605px;width:942px;height:27px;background:#e6e6e6;"></div>
<svg class="s" width="944" height="655" viewBox="0 0 944 655" fill="none"><path d="M1 604.5 H943" stroke="#a0a0a0" stroke-width="1"/>
<path d="M31.8 614.4 L27.6 617.6 L31.8 620.8 Z" fill="#c0c0c0"/>
<path d="M57 614.4 L61.2 617.6 L57 620.8 Z" fill="#c0c0c0"/>
<path d="M101.5 604 V627 H165.5 V604" fill="#fff" stroke="#a0a0a0" stroke-width="1"/>
<path d="M101 628 H166" stroke="#217346" stroke-width="2"/></svg>
<div class="t" style="left:112.60px;top:610.53px;font-size:13.4px;color:#217346;font-weight:700;letter-spacing:-0.7px;">Sheet1</div>
<svg class="s" width="944" height="655" viewBox="0 0 944 655" fill="none"><circle cx="207.2" cy="618" r="7" stroke="#6a6a6a" stroke-width="1.1"/><path d="M207.2 613.6 V622.4 M202.8 618 H211.6" stroke="#6a6a6a" stroke-width="1.5"/>
<rect x="566" y="613" width="2" height="2" fill="#a8a8a8"/><rect x="566" y="617" width="2" height="2" fill="#a8a8a8"/><rect x="566" y="621" width="2" height="2" fill="#a8a8a8"/>
<rect x="583" y="611" width="339" height="15" fill="#d6d6d6"/>
<rect x="583.5" y="611.5" width="14.5" height="14" fill="#fff" stroke="#a6a6a6" stroke-width="1"/>
<path d="M592.6 614.6 V622.4 L588.6 618.5 Z" fill="#606060"/>
<rect x="598.5" y="611.5" width="287" height="14" fill="#fff" stroke="#a6a6a6" stroke-width="1"/>
<rect x="907.5" y="611.5" width="14" height="14" fill="#fff" stroke="#a6a6a6" stroke-width="1"/>
<path d="M913 614.6 V622.4 L917 618.5 Z" fill="#606060"/></svg>
<div class="a" style="left:1px;top:632px;width:942px;height:1px;background:#c8c6c4;"></div>
<div class="a" style="left:1px;top:633px;width:942px;height:21px;background:#f3f2f1;"></div>
<div class="t" style="left:9.60px;top:638.35px;font-size:10.6px;color:#444;">Ready</div>
<div class="t" style="left:55.00px;top:638.01px;font-size:11.85px;color:#444;">Workbook Statistics</div>
<svg class="s" width="944" height="655" viewBox="0 0 944 655" fill="none"><circle cx="183.9" cy="638" r="1.7" stroke="#3b3a39" stroke-width="1.1" stroke-linecap="round"/>
<path d="M182.2 639.4 C180 638.2 178 638.8 178.4 640.6 C178.7 641.6 180 641.8 181.4 642 M185.6 639.4 C187.8 638.2 189.8 638.8 189.4 640.6 C189.1 641.6 187.8 641.8 186.4 642" stroke="#3b3a39" stroke-width="1.1" stroke-linecap="round"/>
<path d="M181.4 642 C181.4 644.5 180.8 646.5 180.2 648 C179.9 649.2 181.2 649.6 182.4 649.2 M186.4 642 V644.4" stroke="#3b3a39" stroke-width="1.1" stroke-linecap="round"/>
<path d="M184.4 646 L187.4 649.4 L192.4 644.2" stroke="#3b3a39" stroke-width="1.1" stroke-linecap="round"/></svg>
<div class="t" style="left:196.50px;top:638.25px;font-size:11.5px;color:#444;">Accessibility: Good to go</div>
<div class="a" style="left:632px;top:633px;width:40px;height:21px;background:#d4d2d0;"></div>
<svg class="s" width="944" height="655" viewBox="0 0 944 655" fill="none"><path d="M645.5 636.5 H657.5 V648.5 H645.5 Z M649.5 636.5 V648.5 M653.5 636.5 V648.5 M645.5 640.5 H657.5 M645.5 644.5 H657.5" stroke="#3b3a39" stroke-width="1.1"/>
<path d="M685.5 636.5 H698.5 V648.5 H685.5 Z M688.5 639.5 H695.5 V645.5 H688.5 Z M690 641.5 H694 M690 643.5 H694" stroke="#3b3a39" stroke-width="1.05"/>
<path d="M725.5 636.5 H738.5 V648.5 H725.5 Z M725.5 643.5 H733.5 V636.5 M729.5 636.5 V643.5" stroke="#3b3a39" stroke-width="1.05"/>
<path d="M758 642.6 H765.8" stroke="#444" stroke-width="1.1"/>
<path d="M771 642.8 H870.6" stroke="#666" stroke-width="1.1"/>
<path d="M821.5 639.6 V646" stroke="#555" stroke-width="1"/>
<rect x="832" y="637.8" width="5" height="11" fill="#6b6b6b"/>
<path d="M876.4 642.8 H883.6 M880 639.2 V646.4" stroke="#444" stroke-width="1.1"/></svg>
<div class="t" style="left:896.80px;top:637.88px;font-size:11.2px;color:#444;">184%</div>
<div class="a" style="left:0px;top:35px;width:1px;height:620px;background:#217346;"></div>
<div class="a" style="left:943px;top:35px;width:1px;height:620px;background:#217346;"></div>
<div class="a" style="left:0px;top:654px;width:944px;height:1px;background:#217346;"></div>
</body></html>
